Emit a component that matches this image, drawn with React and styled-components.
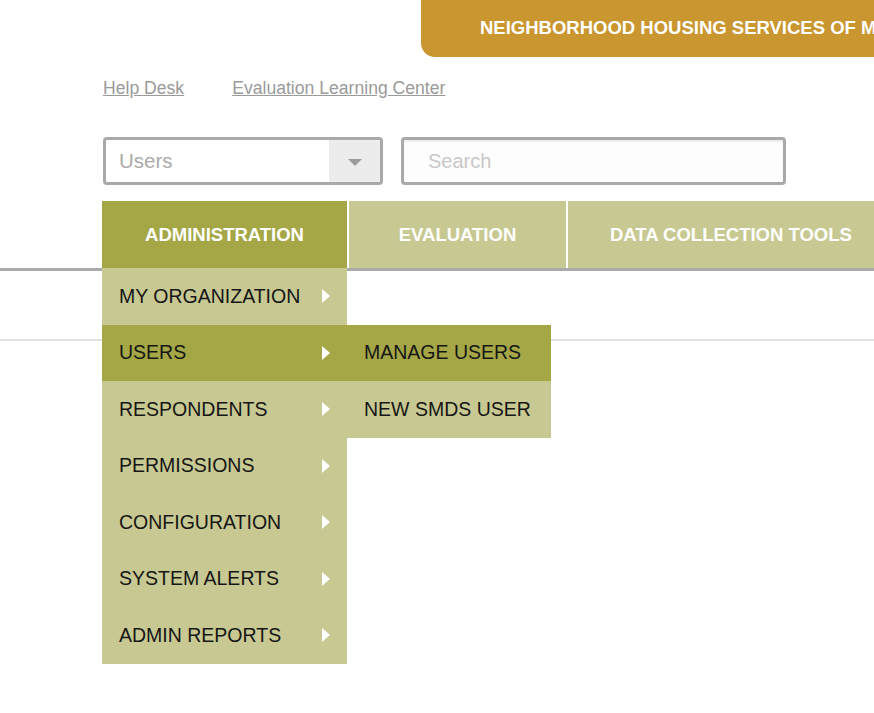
import React from 'react';
import styled, { createGlobalStyle } from 'styled-components';

const GlobalStyle = createGlobalStyle`
    html, body {
        margin: 0;
        padding: 0;
        background: #fff;
        overflow-x: hidden;
    }
    body {
        font-family: "Liberation Sans", Arial, sans-serif;
    }
`;

const DARK = '#a5a747';
const LIGHT = '#c8c992';

const adminItems = [
    'MY ORGANIZATION',
    'USERS',
    'RESPONDENTS',
    'PERMISSIONS',
    'CONFIGURATION',
    'SYSTEM ALERTS',
    'ADMIN REPORTS',
];

const userItems = ['MANAGE USERS', 'NEW SMDS USER'];

const App = () => {
    return (
        <Page>
            <GlobalStyle />
            <TopBar>
                <Banner>NEIGHBORHOOD HOUSING SERVICES OF MILWAUKEE</Banner>
            </TopBar>

            <Links>
                <LinkText href="#">Help Desk</LinkText>
                <LinkText href="#">Evaluation Learning Center</LinkText>
            </Links>

            <SearchRow>
                <SelectBox>
                    <SelectValue>Users</SelectValue>
                    <CaretArea>
                        <Caret />
                    </CaretArea>
                </SelectBox>
                <SearchInput type="text" placeholder="Search" />
            </SearchRow>

            <NavWrap>
                <Nav>
                    <NavItem $width="245px" $active>
                        ADMINISTRATION
                        <Dropdown>
                            {adminItems.map((label) => (
                                <MenuItem key={label} $active={label === 'USERS'}>
                                    <span>{label}</span>
                                    <Arrow />
                                    {label === 'USERS' && (
                                        <SubMenu>
                                            {userItems.map((sub) => (
                                                <SubItem key={sub} $active={sub === 'MANAGE USERS'}>
                                                    {sub}
                                                </SubItem>
                                            ))}
                                        </SubMenu>
                                    )}
                                </MenuItem>
                            ))}
                        </Dropdown>
                    </NavItem>
                    <NavItem $width="217px">EVALUATION</NavItem>
                    <NavItem $pad="42px">DATA COLLECTION TOOLS</NavItem>
                </Nav>
            </NavWrap>

            <SubBar />
        </Page>
    );
};

export default App;

const Page = styled.div`
    width: 100%;
    min-height: 713px;
`;

const TopBar = styled.div`
    display: flex;
    padding-left: 421px;
`;

const Banner = styled.div`
    flex: 1;
    min-width: 0;
    height: 57px;
    line-height: 55px;
    padding-left: 59px;
    background: #c9962f;
    border-bottom-left-radius: 14px;
    color: #fff;
    font-weight: bold;
    font-size: 18.5px;
    white-space: nowrap;
    overflow: hidden;
`;

const Links = styled.div`
    display: flex;
    gap: 48px;
    margin-top: 21px;
    padding-left: 103px;
    height: 20px;
`;

const LinkText = styled.a`
    color: #9a9a9a;
    font-size: 17.6px;
    line-height: 20px;
    text-decoration: underline;
`;

const SearchRow = styled.div`
    display: flex;
    gap: 18px;
    margin-top: 39px;
    padding-left: 103px;
`;

const SelectBox = styled.div`
    box-sizing: border-box;
    display: flex;
    width: 280px;
    height: 48px;
    border: 3px solid #a9a9a9;
    border-radius: 4px;
    background: #fff;
    overflow: hidden;
`;

const SelectValue = styled.div`
    flex: 1;
    padding-left: 13px;
    line-height: 42px;
    font-size: 20.5px;
    color: #aaa;
`;

const CaretArea = styled.div`
    width: 51px;
    display: flex;
    align-items: center;
    justify-content: center;
    background: #ececec;
`;

const Caret = styled.div`
    width: 0;
    height: 0;
    margin-top: 3px;
    border-left: 7px solid transparent;
    border-right: 7px solid transparent;
    border-top: 7px solid #9c9c9c;
`;

const SearchInput = styled.input`
    box-sizing: border-box;
    width: 385px;
    height: 48px;
    padding: 0 0 0 24px;
    border: 3px solid #a9a9a9;
    border-radius: 4px;
    background: #fdfdfd;
    box-shadow: inset 0 2px 2px rgba(0, 0, 0, 0.07);
    font-family: inherit;
    font-size: 20px;
    outline: none;

    &::placeholder {
        color: #c8c8c8;
    }
`;

const NavWrap = styled.div`
    margin-top: 16px;
    padding-left: 102px;
    border-bottom: 3px solid #aaa;
`;

const Nav = styled.div`
    display: flex;
    gap: 2px;
    height: 67px;
`;

const NavItem = styled.div`
    position: relative;
    box-sizing: border-box;
    flex: ${(p) => (p.$width ? `0 0 ${p.$width}` : '0 0 auto')};
    padding: 0 ${(p) => p.$pad || '0'};
    display: flex;
    align-items: center;
    justify-content: ${(p) => (p.$width ? 'center' : 'flex-start')};
    background: ${(p) => (p.$active ? DARK : LIGHT)};
    color: #fff;
    font-weight: bold;
    font-size: 18.5px;
    white-space: nowrap;
`;

const Dropdown = styled.div`
    position: absolute;
    top: 100%;
    left: 0;
    width: 245px;
    z-index: 10;
    background: ${LIGHT};
`;

const MenuItem = styled.div`
    position: relative;
    box-sizing: border-box;
    height: 56.5px;
    padding: 0 17px;
    display: flex;
    align-items: center;
    justify-content: space-between;
    background: ${(p) => (p.$active ? DARK : LIGHT)};
    color: #161616;
    font-weight: normal;
    font-size: 19.5px;
`;

const Arrow = styled.div`
    width: 0;
    height: 0;
    border-top: 7px solid transparent;
    border-bottom: 7px solid transparent;
    border-left: 8px solid #fff;
`;

const SubMenu = styled.div`
    position: absolute;
    top: 0;
    left: 100%;
    width: 204px;
`;

const SubItem = styled.div`
    box-sizing: border-box;
    height: 56.5px;
    padding-left: 17px;
    display: flex;
    align-items: center;
    background: ${(p) => (p.$active ? DARK : LIGHT)};
    color: #161616;
    font-size: 19.5px;
    white-space: nowrap;
`;

const SubBar = styled.div`
    height: 68px;
    border-bottom: 2px solid #e2e2e2;
`;
